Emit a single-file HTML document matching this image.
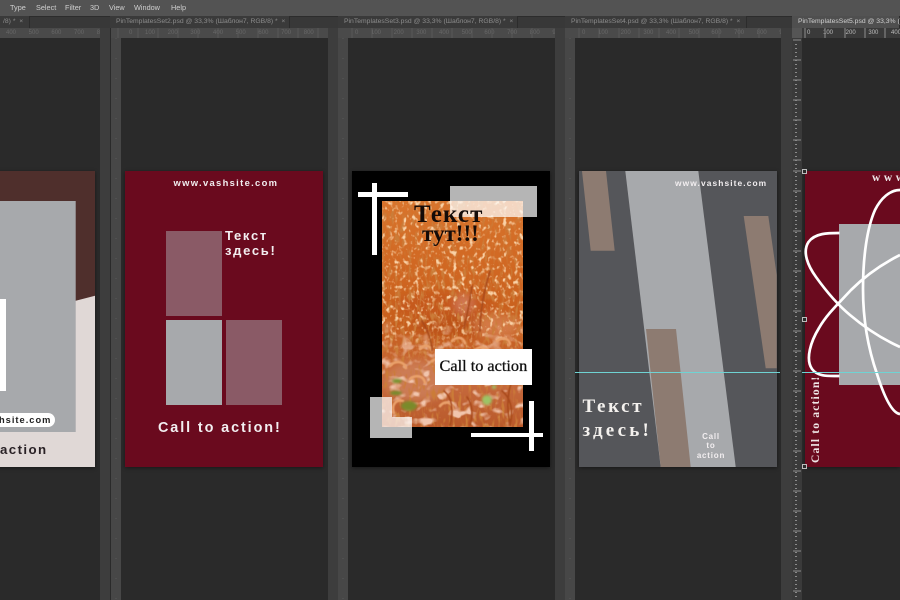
<!DOCTYPE html>
<html lang="ru"><head><meta charset="utf-8"><title>PinTemplates</title>
<style>
*{box-sizing:border-box}
html,body{margin:0;padding:0;background:#2a2a2a}
#p{position:relative;width:900px;height:600px;overflow:hidden;background:#2a2a2a;font-family:"Liberation Sans",sans-serif;filter:blur(.3px)}
#p div,#p span{position:absolute;white-space:nowrap}
.sep{top:28px;height:572px;background:#3d3d3d}
.vr{top:38px;height:562px;width:10px;background:#474747}
.tab{top:16px;height:12px;background:#3a3a3a;border-right:1px solid #2c2c2c;color:#8c8c8c;font-size:6.8px;line-height:12px;padding-left:6px}
.hr{top:28px;height:10px;background:#4a4a4a;color:#686868;font-size:6px;line-height:10px}
.doc{top:171px;width:198px;height:296px;overflow:hidden;box-shadow:0 1px 4px rgba(0,0,0,.45)}
.m{top:2px;font-size:7.3px;line-height:12px;color:#cfcfcf}
.w{color:#f2eef0;font-weight:700}
.sf{font-family:"Liberation Serif",serif;font-weight:700}
.h{width:5px;height:5px;left:802px;background:#2a2a2a;border:1px solid #bdbdbd}
</style></head><body><div id="p">
<div style="left:0;top:0;width:900px;height:16px;background:#535353"></div>
<div class="m" style="left:10px">Type</div><div class="m" style="left:36px">Select</div><div class="m" style="left:65px">Filter</div><div class="m" style="left:90px">3D</div><div class="m" style="left:109px">View</div><div class="m" style="left:134px">Window</div><div class="m" style="left:171px">Help</div>
<div style="left:0;top:16px;width:900px;height:12px;background:#383838;border-top:1px solid #2c2c2c"></div>
<div class="tab" style="left:-40px;width:70px;padding-left:43px">/8) *&nbsp; ×</div>
<div class="tab" style="left:110px;width:180px">PinTemplatesSet2.psd @ 33,3% (Шаблон7, RGB/8) * &nbsp;×</div>
<div class="tab" style="left:338px;width:180px">PinTemplatesSet3.psd @ 33,3% (Шаблон7, RGB/8) * &nbsp;×</div>
<div class="tab" style="left:565px;width:182px">PinTemplatesSet4.psd @ 33,3% (Шаблон7, RGB/8) * &nbsp;×</div>
<div class="tab" style="left:792px;width:108px;background:#4f4f4f;color:#d0d0d0">PinTemplatesSet5.psd @ 33,3% (Шаблон7</div>

<div class="hr" style="left:0;width:100px;padding-left:6px;word-spacing:11px">400 500 600 700 800</div>
<div class="hr" style="left:111px;width:217px;padding-left:18px;word-spacing:11px">0 100 200 300 400 500 600 700 800</div>
<div class="hr" style="left:338px;width:217px;padding-left:17px;word-spacing:11px">0 100 200 300 400 500 600 700 800 900</div>
<div class="hr" style="left:565px;width:216px;padding-left:17px;word-spacing:11px">0 100 200 300 400 500 600 700 800 900</div>
<div class="hr" style="left:792px;width:108px;padding-left:15px;background:#3a3a3a;color:#bdbdbd;word-spacing:11px">0 100 200 300 400</div>
<div style="left:792px;top:28px;width:10px;height:10px;background:#555"></div>

<div class="sep" style="left:100px;width:10px"></div><div class="sep" style="left:328px;width:10px"></div><div class="sep" style="left:555px;width:10px"></div><div class="sep" style="left:781px;width:11px"></div>
<div class="vr" style="left:111px"></div><div class="vr" style="left:338px"></div><div class="vr" style="left:565px"></div><div class="vr" style="left:792px;background:#3a3a3a"></div>
<svg style="position:absolute;left:0;top:28px" width="900" height="572">
<g stroke="#585858" stroke-width="1" stroke-dasharray="1 19" fill="none"><path d="M116 10V572M343 10V572M570 10V572"/></g>
<g stroke="#585858" stroke-width="1"><path d="M118 0V10M138 0V10M158 0V10M178 0V10M198 0V10M218 0V10M238 0V10M258 0V10M278 0V10M298 0V10M318 0V10M352 0V10M372 0V10M392 0V10M412 0V10M432 0V10M452 0V10M472 0V10M492 0V10M512 0V10M532 0V10M579 0V10M599 0V10M619 0V10M639 0V10M659 0V10M679 0V10M699 0V10M719 0V10M739 0V10M759 0V10"/></g>
<g stroke="#8e8e8e" stroke-width="1"><path d="M805 0V10M825 0V10M845 0V10M865 0V10M885 0V10"/><path d="M793 12H801M793 32H801M793 52H801M793 72H801M793 92H801M793 112H801M793 132H801M793 143H801M793 163H801M793 183H801M793 203H801M793 223H801M793 243H801M793 263H801M793 283H801M793 303H801M793 323H801M793 343H801M793 363H801M793 383H801M793 403H801M793 423H801M793 443H801M793 463H801M793 483H801M793 503H801M793 523H801M793 543H801M793 563H801"/></g>
<g stroke="#8a8a8a" stroke-width="2" stroke-dasharray="1 3" fill="none"><path d="M796 16V570"/></g>
</svg>

<!-- doc 1 -->
<div class="doc" style="left:-103px;background:#e0d8d6">
<svg style="position:absolute;left:0;top:0" width="198" height="296"><polygon points="0,0 198,0 198,124.7 178.7,129.7 0,180" fill="#4f2f2c"/><rect x="60" y="30" width="118.7" height="231" fill="#a7a9ac"/><rect x="30" y="128" width="79" height="92" fill="#fff"/></svg>
</div>
<div style="left:-20px;top:412.7px;width:74.5px;height:14px;background:#fff;border-radius:7px"></div>
<div style="left:-1px;top:413px;font-size:9.3px;line-height:14px;font-weight:700;letter-spacing:1px;color:#222">hsite.com</div>
<div style="left:0;top:442px;font-size:13.3px;line-height:16px;font-weight:700;letter-spacing:1.4px;color:#2a2226">action</div>

<!-- doc 2 -->
<div class="doc" style="left:125px;background:#6a0a1e"></div>
<div style="left:166px;top:231.3px;width:56px;height:84.7px;background:#8a5a66"></div>
<div style="left:166px;top:320px;width:56px;height:85px;background:#a7a9ac"></div>
<div style="left:226px;top:320px;width:56px;height:85px;background:#8a5a66"></div>
<div class="w" style="left:173.5px;top:177px;font-size:9.4px;line-height:12px;letter-spacing:1.33px">www.vashsite.com</div>
<div class="w" style="left:225px;top:228px;font-size:13px;line-height:15px;letter-spacing:1.7px">Текст</div>
<div class="w" style="left:225px;top:242.5px;font-size:13px;line-height:15px;letter-spacing:1.7px">здесь!</div>
<div class="w" style="left:158px;top:420px;font-size:14.4px;line-height:17px;letter-spacing:1.9px">Call to action!</div>

<!-- doc 3 -->
<div class="doc" style="left:352px;background:#000"></div>
<svg style="position:absolute;left:382px;top:201px" width="141" height="226" viewBox="0 0 141 226">
<defs>
<linearGradient id="g" x1="0" y1="0" x2="0" y2="1"><stop offset="0" stop-color="#d8742c"/><stop offset=".3" stop-color="#d06722"/><stop offset=".55" stop-color="#c75e1c"/><stop offset=".8" stop-color="#c66a3e"/><stop offset="1" stop-color="#b9592a"/></linearGradient>
<linearGradient id="ft" x1="0" y1="0" x2="0" y2="1"><stop offset="0" stop-color="#fff"/><stop offset=".55" stop-color="#fff"/><stop offset=".72" stop-color="#000"/></linearGradient>
<linearGradient id="fb" x1="0" y1="0" x2="0" y2="1"><stop offset=".5" stop-color="#000"/><stop offset=".72" stop-color="#fff"/></linearGradient>
<mask id="mt"><rect width="141" height="226" fill="url(#ft)"/></mask>
<mask id="mb"><rect width="141" height="226" fill="url(#fb)"/></mask>
<filter id="n" x="0" y="0" width="100%" height="100%"><feTurbulence type="fractalNoise" baseFrequency=".24 .2" numOctaves="2" seed="7"/><feColorMatrix type="matrix" values="0 0 0 0 .95  0 0 0 0 .64  0 0 0 0 .38  3 3 0 0 -3.15"/></filter>
<filter id="d" x="0" y="0" width="100%" height="100%"><feTurbulence type="fractalNoise" baseFrequency=".3 .09" numOctaves="2" seed="3"/><feColorMatrix type="matrix" values="0 0 0 0 .6  0 0 0 0 .2  0 0 0 0 .04  3 3 0 0 -3"/></filter>
<filter id="l" x="0" y="0" width="100%" height="100%"><feTurbulence type="fractalNoise" baseFrequency=".1 .12" numOctaves="2" seed="11"/><feColorMatrix type="matrix" values="0 0 0 0 .88  0 0 0 0 .56  0 0 0 0 .42  3 3 0 0 -3.1"/></filter>
<filter id="b"><feGaussianBlur stdDeviation="4"/></filter>
<filter id="b2"><feGaussianBlur stdDeviation="1.2"/></filter>
<filter id="b3"><feGaussianBlur stdDeviation=".6"/></filter>
</defs>
<rect width="141" height="226" fill="url(#g)"/>
<g filter="url(#b)" opacity=".7"><ellipse cx="62" cy="105" rx="50" ry="14" fill="#c4571a"/><ellipse cx="75" cy="125" rx="45" ry="12" fill="#b94f16"/><ellipse cx="82" cy="103" rx="9" ry="10" fill="#d28068"/><ellipse cx="35" cy="180" rx="32" ry="20" fill="#cf8460"/><ellipse cx="115" cy="125" rx="22" ry="12" fill="#d98456"/></g>
<rect width="141" height="226" filter="url(#d)"/>
<g mask="url(#mt)"><rect width="141" height="226" filter="url(#n)"/></g>
<g mask="url(#mb)"><rect width="141" height="226" filter="url(#l)"/></g>
<g filter="url(#b3)" fill="none" stroke-linecap="round">
<g stroke="#e9a06a" stroke-width="2.6"><path d="M8 165c5-6 14-5 16 2M28 178c6-5 14-3 15 4M50 160c6-4 12-3 14 3M12 212c-3-8 2-14 9-12M58 205c5-6 12-4 13 3M92 150c6-6 14-4 16 2M115 140c5-4 12-3 13 3M70 140c5-5 11-4 13 2M38 148c4-5 10-4 12 2"/></g>
<g stroke="#a8481a" stroke-width="1.6"><path d="M62 190c8 6 10 20 6 34M85 196c6 8 6 18 3 28M120 190c8 6 12 18 8 34M132 176c-6 10-8 30-4 46M40 120c6 10 10 20 10 30M108 70c-6 20-10 40-10 60M90 85c-2 15-4 25-8 42"/></g>
</g>
<g filter="url(#b2)"><ellipse cx="15" cy="180" rx="5" ry="2" fill="#6e8f28"/><ellipse cx="27" cy="205" rx="8" ry="5" fill="#7a8a2c"/><ellipse cx="14" cy="192" rx="6" ry="2" fill="#6f8c2a"/><ellipse cx="105" cy="199" rx="5" ry="5" fill="#9cc466"/><ellipse cx="112" cy="186" rx="2" ry="2" fill="#9cc466"/></g>
</svg>
<div style="left:450px;top:186px;width:87px;height:31px;background:rgba(255,255,255,.71)"></div>
<div style="left:370px;top:396.7px;width:21.5px;height:41.3px;background:rgba(255,255,255,.71)"></div>
<div style="left:391.5px;top:417px;width:20.5px;height:21px;background:rgba(255,255,255,.71)"></div>
<div style="left:358px;top:192px;width:50px;height:4.7px;background:#fff"></div>
<div style="left:371.7px;top:183px;width:5px;height:71.7px;background:#fff"></div>
<div style="left:470.7px;top:432.7px;width:72px;height:4.6px;background:#fff"></div>
<div style="left:528.7px;top:401px;width:5px;height:49.7px;background:#fff"></div>
<div style="left:435px;top:348.7px;width:97.3px;height:36.3px;background:#fff"></div>
<div class="sf" style="left:414px;top:201px;font-size:25px;line-height:28px;letter-spacing:1.1px;color:#140b08">Текст</div>
<div class="sf" style="left:422px;top:220px;font-size:23px;line-height:28px;color:#140b08">тут!!!</div>
<div style="left:439.5px;top:356px;font-family:'Liberation Serif',serif;font-size:16.3px;line-height:20px;color:#111;-webkit-text-stroke:.3px #111">Call to action</div>

<!-- doc 4 -->
<div class="doc" style="left:579px;background:#55565a">
<svg style="position:absolute;left:0;top:0" width="198" height="296"><polygon points="46.3,0 119.3,0 156.7,296 81.7,296" fill="#a7a9ac"/><polygon points="3,0 27,0 35.7,79.7 11.7,79.7" fill="#8d7b71"/><polygon points="164.7,45 189.3,45 197.7,104 197.7,197.3 186.7,197.3" fill="#8d7b71"/><polygon points="67,158 97,158 111.7,296 81.7,296" fill="#8d7b71"/></svg>
</div>
<div class="w" style="left:675px;top:177px;font-size:8.4px;line-height:12px;letter-spacing:1.1px">www.vashsite.com</div>
<div class="sf" style="left:582.5px;top:395px;font-size:19px;line-height:24px;letter-spacing:2.6px;color:#f4f1ee">Текст</div>
<div class="sf" style="left:582.5px;top:419px;font-size:19px;line-height:24px;letter-spacing:3.2px;color:#f4f1ee">здесь!</div>
<div class="w" style="left:691px;width:40px;text-align:center;top:432px;font-size:8px;line-height:9.4px;letter-spacing:.8px;white-space:normal">Call<br>to<br>action</div>
<div style="left:575px;top:372px;width:205px;height:1px;background:#6fd3d3"></div>

<!-- doc 5 -->
<div style="left:805px;top:171px;width:95px;height:296px;background:#6a0a1e;box-shadow:0 1px 4px rgba(0,0,0,.45)"></div>
<div style="left:839.3px;top:223.7px;width:61px;height:161px;background:#a7a9ac"></div>
<svg style="position:absolute;left:800px;top:171px" width="100" height="296" fill="none" stroke="#fff" stroke-width="2.7">
<path d="M39.5 62C28 62 15 62 8.500 71C2 81 8 95 16 106C26 120 38 134 50 144C63 155 80 167 100 176"/>
<path d="M39.500 205C28 205 18 206 12 198C5 188 11 170 19 157C27 143 39 132 51 119C65 105 82 93 100 84"/>
<path d="M100 19C90 19 81 27 75 39C67 57 63 86 63 118C63 150 69 180 77 203C83 222 91 242 100 243"/>
</svg>
<div class="sf" style="left:872px;top:171px;font-size:11.5px;line-height:14px;letter-spacing:3.6px;color:#efe9ea">www</div>
<div class="sf" style="left:776px;top:416px;width:80px;text-align:left;font-size:11.6px;line-height:14px;letter-spacing:1.15px;color:#efe6e6;transform:rotate(-90deg);transform-origin:center">Call to action!</div>
<div style="left:802px;top:372px;width:98px;height:1px;background:#6fd3d3"></div>
<div class="h" style="top:169px"></div><div class="h" style="top:317px"></div><div class="h" style="top:464px"></div>
</div></body></html>
